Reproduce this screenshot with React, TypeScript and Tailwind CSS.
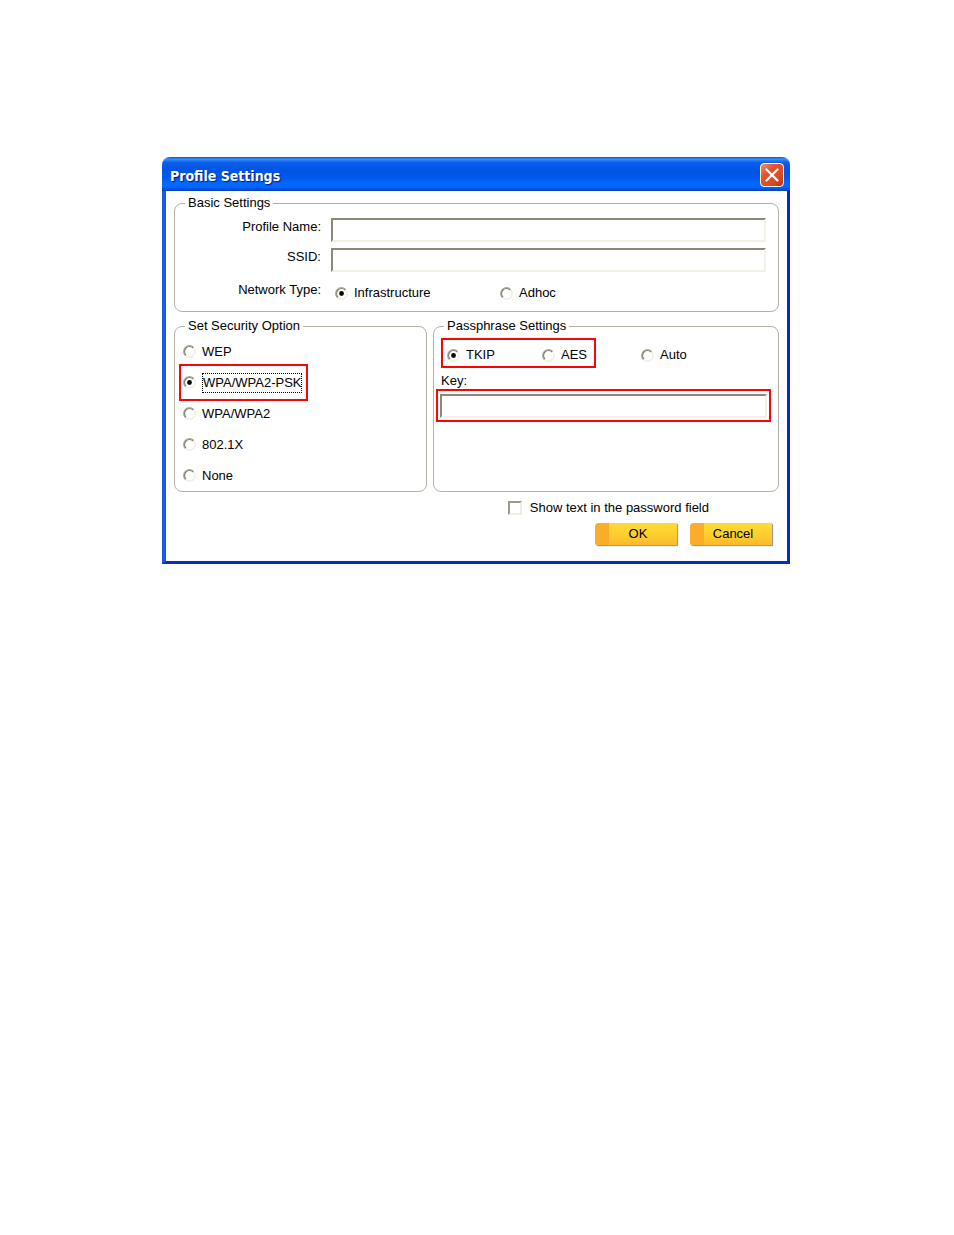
import { useId, type ReactNode } from "react";

function Dial({ children, name, defaultChecked, className = "", focused = false, marked = false }: {
  children: ReactNode;
  name: string;
  defaultChecked?: boolean;
  className?: string;
  focused?: boolean;
  marked?: boolean;
}) {
  return (
    <label className={`relative flex items-center gap-1.5 ${className}`}>
      <span className="relative block size-[13px] shrink-0">
        <input type="radio" name={name} defaultChecked={defaultChecked} className="peer block size-[13px] appearance-none rounded-full bg-white outline-none" />
        <svg viewBox="0 0 13 13" className="pointer-events-none absolute inset-0 size-[13px]" fill="none" aria-hidden="true">
          <path d="M10.5 2.5A5.6 5.6 0 0 1 2.5 10.5" stroke="#f0eee0" strokeWidth="1.4" />
          <path d="M2.3 10.7A5.9 5.9 0 0 1 10.7 2.3" stroke="#aca899" strokeWidth="1.1" />
          <path d="M3 10A4.9 4.9 0 0 1 10 3" stroke="#807d6c" strokeWidth="1.1" />
        </svg>
        <svg viewBox="0 0 13 13" className="pointer-events-none absolute inset-0 hidden size-[13px] peer-checked:block" aria-hidden="true">
          <circle cx="6.5" cy="6.5" r="2.4" fill="#000" />
        </svg>
      </span>
      <span className={focused ? "border border-dotted border-black leading-[18px]" : "leading-[18px]"}>{children}</span>
      {marked && <span className="pointer-events-none absolute -top-[3px] -right-1.5 -bottom-[3px] -left-1 border-2 border-[#fa0505]" />}
    </label>
  );
}

function Group({ title, className = "", children }: { title: string; className?: string; children: ReactNode }) {
  return (
    <fieldset className={`min-w-0 rounded-lg border border-[#b5b2a4] ${className}`}>
      <legend className="ml-2.5 px-[3px] leading-5">{title}</legend>
      {children}
    </fieldset>
  );
}

const field =
  "block h-6 w-full border-2 border-t-[#8b8878] border-r-[#f3f1e7] border-b-[#f3f1e7] border-l-[#8b8878] bg-white px-1 outline-none";

function ActionButton({ children }: { children: ReactNode }) {
  return (
    <button
      type="button"
      className="h-[22px] w-[82px] rounded-tl-[4px] rounded-bl-[2px] bg-[linear-gradient(90deg,#fbac2b_14px,transparent_14px),linear-gradient(#ffdb35_0%,#fdd02d_50%,#fbb92d_100%)] pl-1 shadow-[1px_1px_1px_#8e8e98]"
    >
      {children}
    </button>
  );
}

export default function App() {
  const id = useId();
  return (
    <main className="bg-white pt-[157px] pr-[164px] pb-16 pl-[162px] font-['Liberation_Sans',Arial,sans-serif] text-[13px] text-black">
      <section aria-labelledby={`${id}-title`}>
        <header className="flex h-[34px] items-center justify-between rounded-t-lg bg-[linear-gradient(#0a50d8_0%,#3a91fb_6%,#0c5fea_16%,#0054e3_40%,#0058ea_60%,#0268ff_76%,#0268ff_88%,#0048d0_97%,#003dbb_100%)] pt-0.5 pr-[6px] pl-2">
          <h1 id={`${id}-title`} className="pt-0.5 font-['DejaVu_Sans_Condensed','DejaVu_Sans',sans-serif] text-sm font-bold text-white [text-shadow:1px_1px_1px_#0a1883]">
            Profile Settings
          </h1>
          <button
            type="button"
            aria-label="Close"
            className="flex size-6 items-center justify-center rounded-[4px] border border-white bg-[linear-gradient(135deg,#ef8e72_0%,#e1532f_35%,#dd4a22_70%,#b93405_100%)]"
          >
            <svg viewBox="0 0 14 14" className="size-3.5" aria-hidden="true">
              <path d="M1.5 1.5l11 11M12.5 1.5l-11 11" stroke="#fff" strokeWidth="2.2" strokeLinecap="round" />
            </svg>
          </button>
        </header>

        <form className="border-r-[3px] border-b-[3px] border-l-4 border-r-[#0a2bb8] border-b-[#0a2bc0] border-l-[#1a58e6] bg-white px-2 pt-0.5 pb-4">
          <Group title="Basic Settings" className="pt-[5px] pr-3 pb-[9px]">
            <div className="grid grid-cols-[146px_minmax(0,1fr)] items-start gap-x-2.5 gap-y-1.5 text-right leading-[18px]">
              <label htmlFor={`${id}-name`}>Profile Name:</label>
              <input id={`${id}-name`} type="text" className={field} />
              <label htmlFor={`${id}-ssid`}>SSID:</label>
              <input id={`${id}-ssid`} type="text" className={field} />
              <span className="pt-[3px]">Network Type:</span>
              <div className="flex h-6 items-center pt-[6px] pl-1 text-left">
                <Dial name="network" defaultChecked className="w-[165px]">Infrastructure</Dial>
                <Dial name="network">Adhoc</Dial>
              </div>
            </div>
          </Group>

          <div className="mt-1 grid grid-cols-[253px_minmax(0,1fr)] gap-1.5">
            <Group title="Set Security Option">
              <div className="flex flex-col items-start pl-2">
                <Dial name="security" className="h-[31px]">WEP</Dial>
                <Dial name="security" defaultChecked focused marked className="h-[31px]">WPA/WPA2-PSK</Dial>
                <Dial name="security" className="h-[31px]">WPA/WPA2</Dial>
                <Dial name="security" className="h-[31px]">802.1X</Dial>
                <Dial name="security" className="h-[31px]">None</Dial>
              </div>
            </Group>

            <Group title="Passphrase Settings">
              <div className="flex items-center pt-0.5 pl-[7px]">
                <div className="flex h-[30px] w-[155px] items-center border-2 border-[#fa0505] pt-1 pl-1">
                  <Dial name="cipher" defaultChecked className="w-[95px]">TKIP</Dial>
                  <Dial name="cipher">AES</Dial>
                </div>
                <Dial name="cipher" className="ml-[45px] pt-1">Auto</Dial>
              </div>
              <label htmlFor={`${id}-key`} className="mt-[5px] block pl-[7px] leading-4">Key:</label>
              <div className="mr-[7px] ml-0.5 border-2 border-[#fa0505] px-0.5 pt-[3px] pb-0.5">
                <input id={`${id}-key`} type="text" className={field} />
              </div>
            </Group>
          </div>

          <div className="mt-[7px] flex justify-end pr-[70px]">
            <label className="flex items-center gap-2 leading-[18px]">
              <input
                type="checkbox"
                className="size-[14px] appearance-none border-2 border-t-[#9c998a] border-r-[#f0eee2] border-b-[#f0eee2] border-l-[#9c998a] bg-white checked:bg-black"
              />
              Show text in the password field
            </label>
          </div>

          <div className="mt-1.5 flex justify-end gap-[13px] pr-[7px]">
            <ActionButton>OK</ActionButton>
            <ActionButton>Cancel</ActionButton>
          </div>
        </form>
      </section>
    </main>
  );
}
